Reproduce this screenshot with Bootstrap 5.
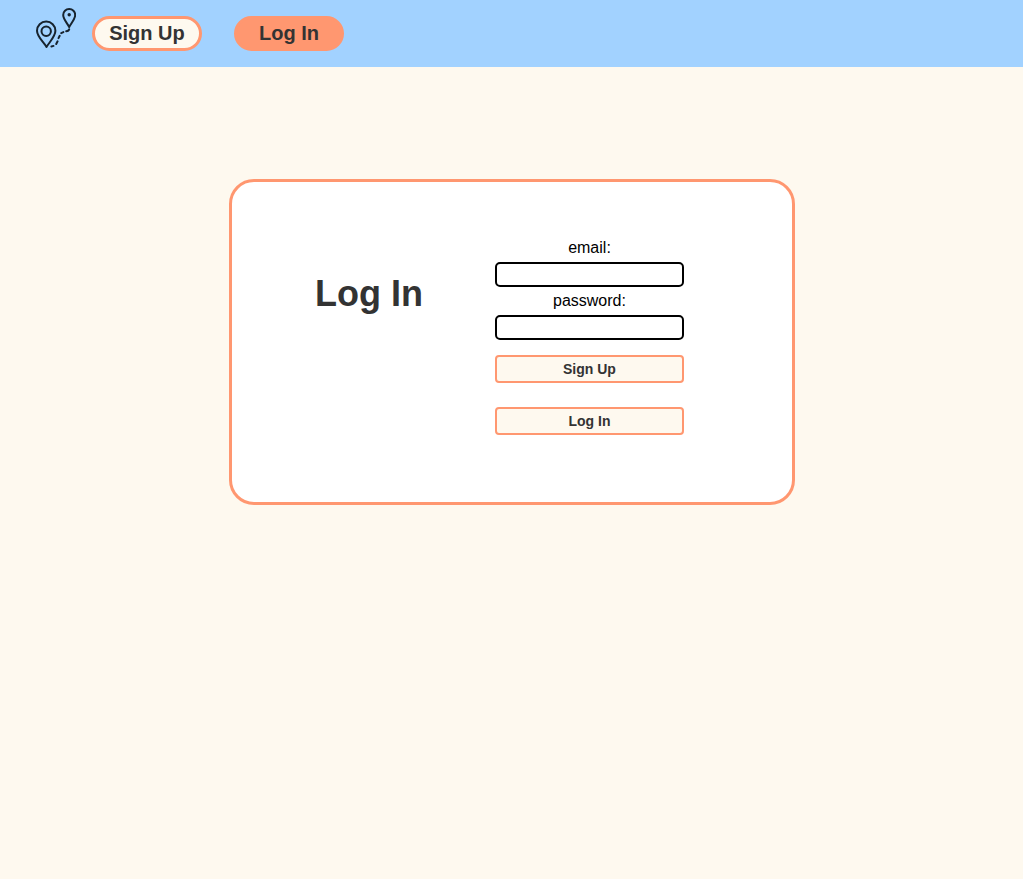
<!DOCTYPE html>
<html lang="en">
<head>
<meta charset="utf-8">
<meta name="viewport" content="width=device-width, initial-scale=1">
<title>Log In</title>
<link href="https://cdn.jsdelivr.net/npm/bootstrap@5.3.0/dist/css/bootstrap.min.css" rel="stylesheet">
<style>
  :root { --sky: #a2d2ff; --coral: #ff9770; --cream: #fef9ef; --ink: #333; }
  body { background: var(--cream); color: #000; font-family: "Liberation Sans", Arial, sans-serif; }
  .site-bar { background: var(--sky); padding: 8px 36px 16px; }
  .site-links { gap: 32px; }
  .nav-pill { width: 110px; height: 35px; margin-top: 8px; border: 3px solid var(--coral); border-radius: 20px;
    background: var(--cream); color: var(--ink); font-size: 20px; line-height: 28px; }
  .nav-pill.current { background: var(--coral); }
  .login-panel { max-width: 566px; margin-top: 112px; padding: 57px 24px 67px 0; gap: 72px;
    background: #fff; border: 3px solid var(--coral); border-radius: 25px; }
  .login-title { margin-top: 34px; color: var(--ink); font-size: 36px; line-height: 42px; }
  .login-form { width: 189px; }
  .login-form label { font-size: 16px; line-height: 18px; }
  .login-field { height: 25px; margin: 5px 0; padding: 0 4px; border: 2px solid #000; border-radius: 5px; background: #fff; }
  .login-actions { gap: 24px; margin-top: 10px; }
  .login-action { height: 28px; padding: 0; border: 2px solid var(--coral); border-radius: 4px;
    background: var(--cream); color: var(--ink); font-size: 14px; line-height: 24px; }
</style>
</head>
<body>
<header class="site-bar d-flex align-items-start">
  <a href="#" class="d-block me-3" aria-label="Home">
    <svg class="d-block" width="40" height="40" viewBox="0 0 40 40" fill="none" stroke="#17232e" stroke-width="2" stroke-linecap="round" stroke-linejoin="round">
      <path d="M10.5 39C8 34.5 1 28.8 1 22.8a9.2 9.2 0 0 1 18.4 0C19.4 28.8 13 34.5 10.5 39Z"/>
      <circle cx="10.2" cy="23.2" r="4.7"/>
      <path d="M33.2 19C31.5 15.5 27.2 11.2 27.2 7a6 6 0 0 1 12 0C39.2 11.2 35 15.5 33.2 19Z"/>
      <circle cx="33.2" cy="6.8" r="1.7" fill="#17232e" stroke="none"/>
      <path d="M15.4 38.5l2.1-.6M20.2 36l1.4-2.7M22.5 30.1l1.2-2.3M25.2 25.1l2.2-1M30.2 23.2q2.6-.2 3-2"/>
    </svg>
  </a>
  <nav class="site-links d-flex" aria-label="Main">
    <a href="#" class="nav-pill fw-bold text-center text-decoration-none">Sign Up</a>
    <a href="#" class="nav-pill current fw-bold text-center text-decoration-none" aria-current="page">Log In</a>
  </nav>
</header>
<main class="login-panel d-flex justify-content-center align-items-start mx-auto">
  <h1 class="login-title fw-bold mb-0 text-nowrap">Log In</h1>
  <form class="login-form d-flex flex-column text-center">
    <label for="email">email:</label>
    <input id="email" class="login-field w-100" type="email">
    <label for="password">password:</label>
    <input id="password" class="login-field w-100" type="password">
    <div class="login-actions d-flex flex-column">
      <button type="button" class="login-action fw-bold w-100">Sign Up</button>
      <button type="submit" class="login-action fw-bold w-100">Log In</button>
    </div>
  </form>
</main>
<script src="https://cdn.jsdelivr.net/npm/bootstrap@5.3.0/dist/js/bootstrap.bundle.min.js"></script>
</body>
</html>
